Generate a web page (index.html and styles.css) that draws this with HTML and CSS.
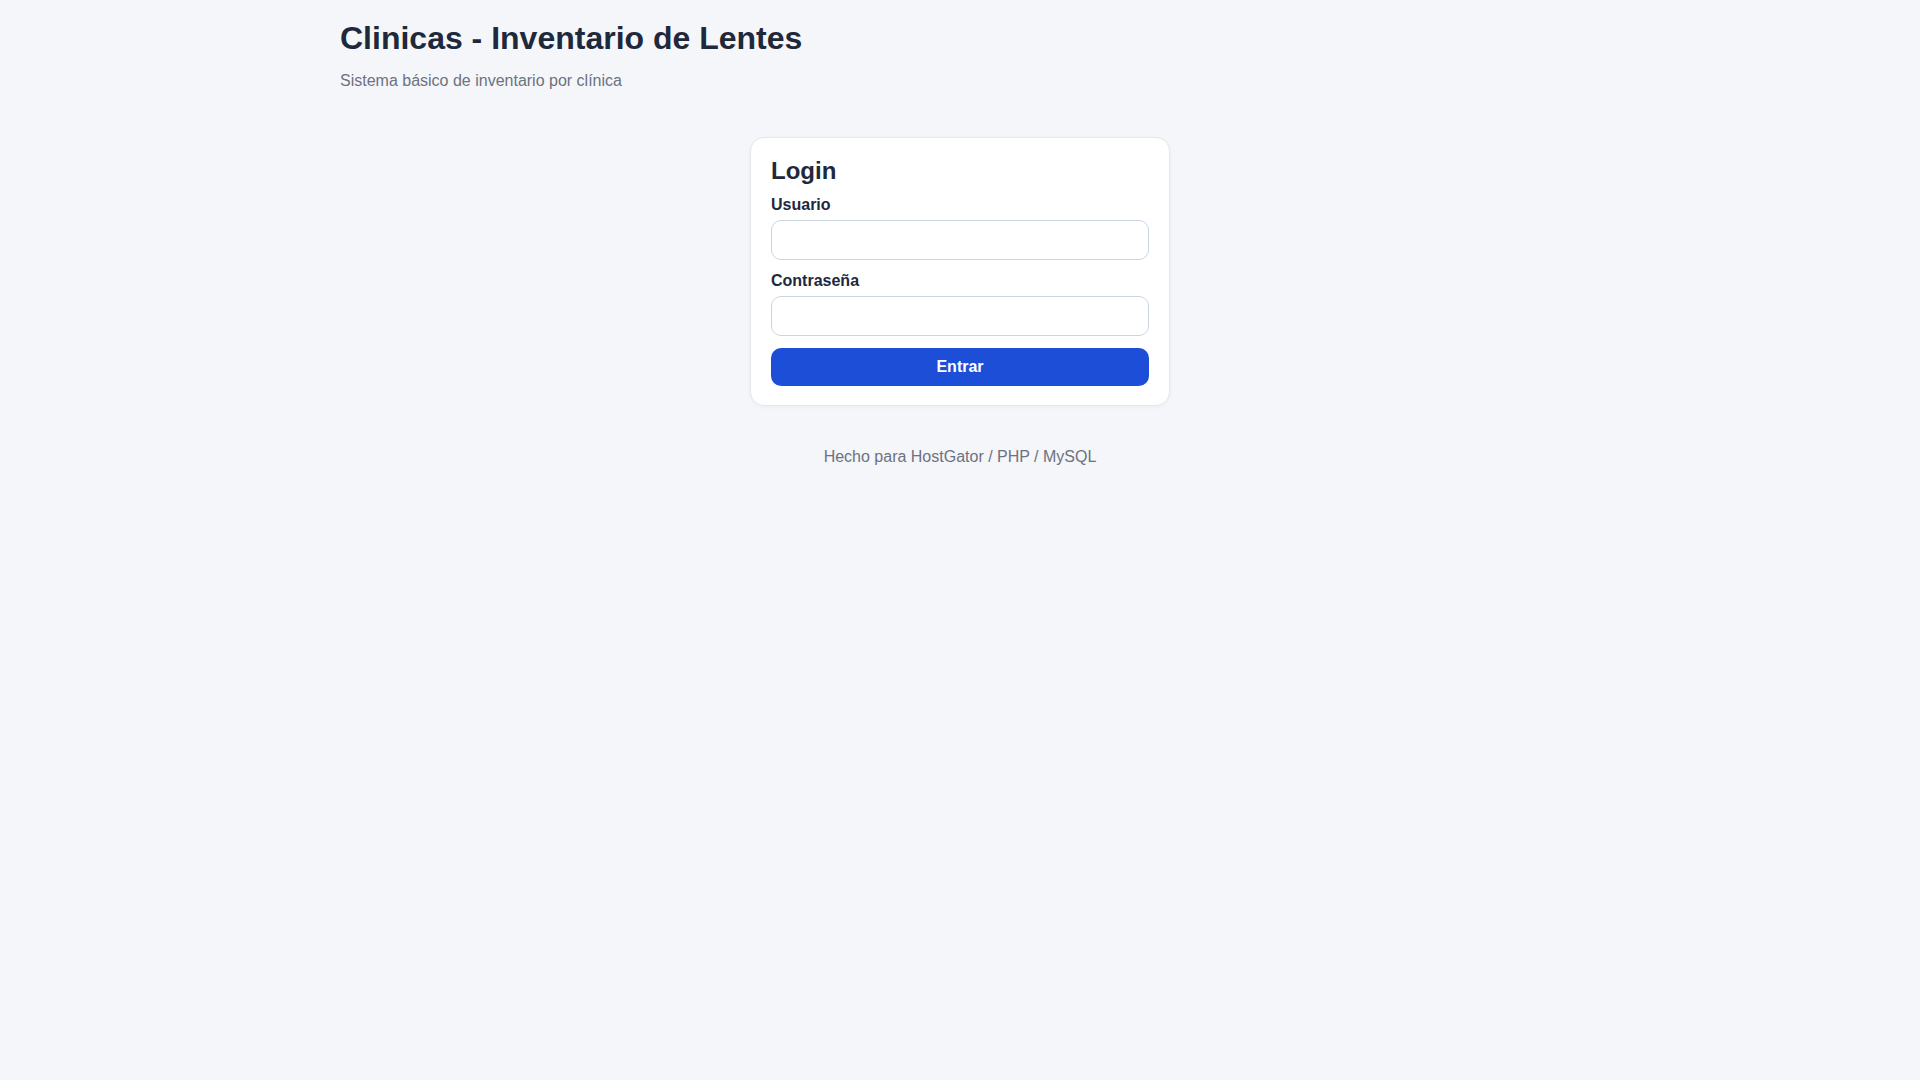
FILE: index.html
```html
<!DOCTYPE html>
<html lang="es">
<head>
    <meta charset="UTF-8">
    <meta name="viewport" content="width=device-width, initial-scale=1.0">
    <title>Clinicas - Inventario de Lentes</title>
    <link rel="stylesheet" href="styles.css">
</head>
<body>
    <header class="header">
        <h1>Clinicas - Inventario de Lentes</h1>
        <p class="subtitle">Sistema básico de inventario por clínica</p>
    </header>

    <main class="main">
        <div class="card">
            <h2>Login</h2>
            <form class="login-form" method="post">
                <label for="usuario">Usuario</label>
                <input type="text" id="usuario" name="usuario">
                <label for="password">Contraseña</label>
                <input type="password" id="password" name="password">
                <button type="submit">Entrar</button>
            </form>
        </div>
    </main>

    <footer class="footer">Hecho para HostGator / PHP / MySQL</footer>
</body>
</html>
```

FILE: styles.css
```css
body {
    font-family: "Liberation Sans", Arial, sans-serif;
    background-color: #f5f6fa;
    color: #1e293b;
    margin: 0;
}

.header {
    max-width: 1240px;
    margin: 0 auto;
    padding: 20px 0 0;
}

.header h1 {
    font-size: 32px;
    margin: 0;
}

.subtitle {
    margin: 15px 0 0;
    color: #6b7280;
    font-size: 16px;
}

.main {
    padding-top: 47px;
}

.card {
    width: 420px;
    box-sizing: border-box;
    margin: 0 auto;
    background: #fff;
    border: 1px solid #e5e7eb;
    border-radius: 14px;
    padding: 19px 20px 19px;
    box-shadow: 0 1px 4px rgba(15, 23, 42, 0.04);
}

.card h2 {
    font-size: 24px;
    margin: 0 0 11px;
}

.login-form {
    display: flex;
    flex-direction: column;
}

.login-form label {
    font-weight: bold;
    font-size: 16px;
    margin-bottom: 6px;
}

.login-form input {
    height: 40px;
    box-sizing: border-box;
    border: 1px solid #cbd5e1;
    border-radius: 10px;
    padding: 8px 10px;
    font-size: 16px;
    margin: 0 0 12px;
}

.login-form button {
    height: 38px;
    border: none;
    border-radius: 10px;
    background-color: #1d4ed8;
    color: #fff;
    font-family: inherit;
    font-weight: bold;
    font-size: 16px;
}

.footer {
    text-align: center;
    color: #6b7280;
    font-size: 16px;
    margin-top: 42px;
}
```
